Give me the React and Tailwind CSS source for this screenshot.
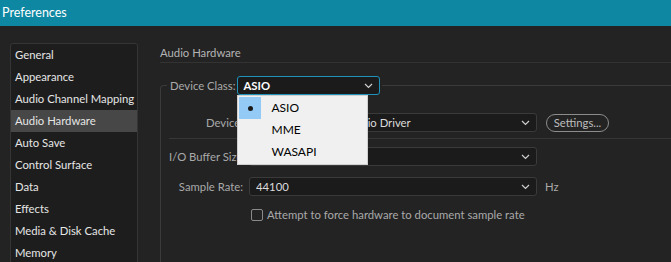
const categories = [
  'General',
  'Appearance',
  'Audio Channel Mapping',
  'Audio Hardware',
  'Auto Save',
  'Control Surface',
  'Data',
  'Effects',
  'Media & Disk Cache',
  'Memory',
];

const Chevron = ({ color = '#cfcfcf' }) => (
  <svg width="9" height="6" viewBox="0 0 9 6" fill="none">
    <path d="M1 1l3.5 3.5L8 1" stroke={color} strokeWidth="1.2" />
  </svg>
);

const Select = ({ value, className = '' }) => (
  <div
    className={`flex h-[19px] items-center justify-between rounded-[3px] border border-[#3a3a3a] bg-[#1b1b1b] pl-[6px] pr-[6px] text-[#dcdcdc] ${className}`}
  >
    <span className="truncate">{value}</span>
    <Chevron />
  </div>
);

export default function App() {
  return (
    <div
      className="h-[262px] w-[671px] overflow-hidden whitespace-nowrap bg-[#232323] text-[11.3px] leading-[16px]"
      style={{ fontFamily: 'Lato, "Noto Sans", sans-serif' }}
    >
      <div className="flex h-[26px] items-center bg-[#0e88a2] pl-[2px] text-[12.5px] text-white">
        Preferences
      </div>

      <div className="flex pt-[17px]">
        {/* category list */}
        <div className="ml-[10px] h-[240px] w-[128px] shrink-0 rounded-[3px] border border-[#353535] bg-[#1d1d1d]">
          {categories.map((c) => (
            <div
              key={c}
              className={`flex h-[22px] items-center pl-[4px] text-[#e6e6e6] ${
                c === 'Audio Hardware' ? 'bg-[#474747]' : ''
              }`}
            >
              {c}
            </div>
          ))}
        </div>

        {/* settings panel */}
        <div className="ml-[22px] flex-1">
          <div className="border-b border-[#333333] pb-[1px] pt-[2px] text-[#b4b4b4]">
            <div className="h-[16px] leading-[16px]">Audio Hardware</div>
          </div>

          <fieldset className="mt-[13px] rounded-tl-[4px] border-l border-t border-[#3a3a3a] pb-[60px]">
            <legend className="ml-[6px] pl-[3px] pr-[2px]">
              <div className="flex items-center">
                <span className="text-[#a9a9a9]">Device Class:</span>
                <div className="relative ml-[2px]">
                  <div className="flex h-[19px] w-[143px] items-center justify-between rounded-[3px] border border-[#1f92bb] bg-[#1b1b1b] pl-[5px] pr-[6px] font-bold text-white">
                    <span>ASIO</span>
                    <Chevron />
                  </div>
                  <div className="absolute left-0 top-full z-10 w-[131px] border border-[#cfcfcf] bg-[#f0f0f0] py-[1px] pl-[1px] text-[12px] text-black">
                    {['ASIO', 'MME', 'WASAPI'].map((o, i) => (
                      <div key={o} className="flex h-[22px] items-center">
                        <div
                          className={`flex h-[22px] w-[22px] items-center justify-center ${
                            i === 0 ? 'bg-[#93cbf6]' : ''
                          }`}
                        >
                          {i === 0 && <div className="h-[5px] w-[5px] rounded-full bg-[#1a1a1a]" />}
                        </div>
                        <span className="ml-[10px]">{o}</span>
                      </div>
                    ))}
                  </div>
                </div>
              </div>
            </legend>

            <div className="pl-[8px] pt-[18px]">
              <div className="flex items-center border-b border-[#363636] pb-[6px]">
                <span className="w-[74px] text-right text-[#a9a9a9]">Device:</span>
                <Select value="Focusrite USB 2.0 Audio Driver" className="ml-[6px] w-[288px]" />
                <div className="ml-[9px] flex h-[18px] w-[63px] items-center justify-center rounded-full border-[1.5px] border-[#8c8c8c] text-[#bdbdbd]">
                  Settings...
                </div>
              </div>

              <div className="mt-[8px] flex items-center">
                <span className="w-[74px] text-right text-[#a9a9a9]">I/O Buffer Size:</span>
                <Select value="512" className="ml-[6px] w-[288px]" />
              </div>

              <div className="mt-[11px] flex items-center">
                <span className="w-[74px] text-right text-[#a9a9a9]">Sample Rate:</span>
                <Select value="44100" className="ml-[6px] w-[288px]" />
                <span className="ml-[8px] text-[#a9a9a9]">Hz</span>
              </div>

              <div className="mt-[11px] flex items-center pl-[82px]">
                <div className="h-[12px] w-[12px] rounded-[2px] border border-[#8a8a8a]" />
                <span className="ml-[4px] text-[#a9a9a9]">Attempt to force hardware to document sample rate</span>
              </div>
            </div>
          </fieldset>
        </div>
      </div>
    </div>
  );
}
